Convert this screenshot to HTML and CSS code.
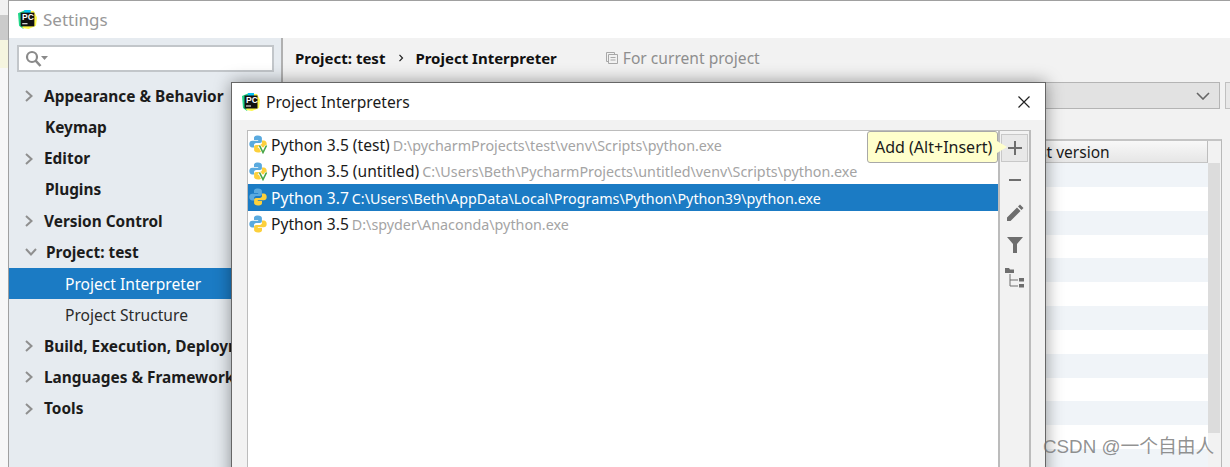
FILE: index.html
```html
<!DOCTYPE html>
<html lang="en">
<head>
  <meta charset="UTF-8">
  <title>Settings</title>
  <link rel="stylesheet" href="styles.css">
</head>
<body>

<svg class="defs" width="0" height="0">
  <symbol id="py" viewBox="0 0 18 18">
    <path class="py-blue" d="M9 .5C5.6 .5 5 1.8 5 3V5H9.2V5.8H3.2C1.6 5.8 .3 7 .3 9.1 .3 11.2 1.6 12.6 3.1 12.6H5V10.2C5 8.9 6 8 7.2 8H11C12 8 12.9 7.2 12.9 6.3V3C12.9 1.6 11.3 .5 9 .5Z"/>
    <path class="py-yellow" d="M9 17.5C12.4 17.5 13 16.2 13 15V13H8.8V12.2H14.8C16.4 12.2 17.7 11 17.7 8.9 17.7 6.8 16.4 5.4 14.9 5.4H13V7.8C13 9.1 12 10 10.8 10H7C6 10 5.1 10.8 5.1 11.7V15C5.1 16.4 6.7 17.5 9 17.5Z"/>
  </symbol>
  <symbol id="pc" viewBox="0 0 18 18">
    <path fill="#21d789" d="M0 3 7 0 9 4 5 18 1 15Z"/>
    <path fill="#fcf84a" d="M9 1 15 1 18 7 17 15 10 18 4 17Z"/>
    <path fill="#07c3f2" d="M6 0 12 0 12 4 6 4Z"/>
    <rect x="2.5" y="2.5" width="13" height="13" fill="#111"/>
    <rect x="4" y="12.5" width="5" height="1" fill="#fff"/>
  </symbol>
  <symbol id="venv" viewBox="0 0 10 10">
    <path class="venv-halo" d="M1.5 1.5 5 8.5 8.5 1.5"/>
    <path class="venv-mark" d="M1.5 1.5 5 8.5 8.5 1.5"/>
  </symbol>
</svg>

<div class="screen">
  <div class="desktop">
    <div class="strip-a"></div>
    <div class="strip-b"></div>
    <div class="strip-c"></div>
    <div class="strip-d"></div>
  </div>

  <div class="window">
    <div class="titlebar">
      <span class="logo">
        <svg width="19" height="19"><use href="#pc"/></svg>
        <b>PC</b>
      </span>
      <span class="window-title">Settings</span>
    </div>

    <div class="window-body">
      <div class="sidebar">
        <div class="search">
          <svg width="24" height="18" viewBox="0 0 24 18">
            <circle cx="7" cy="7" r="5" fill="none" stroke="#8a8a8a" stroke-width="2.2"/>
            <path d="M10.5 10.5 15.5 16" stroke="#8a8a8a" stroke-width="2.6"/>
            <path d="M16 6H23L19.5 10Z" fill="#8a8a8a"/>
          </svg>
        </div>
        <ul class="tree">
          <li class="node"><svg class="arrow" width="10" height="12" viewBox="0 0 10 12"><path d="M2 1 7.5 6 2 11"/></svg>Appearance &amp; Behavior</li>
          <li class="node no-arrow">Keymap</li>
          <li class="node"><svg class="arrow" width="10" height="12" viewBox="0 0 10 12"><path d="M2 1 7.5 6 2 11"/></svg>Editor</li>
          <li class="node no-arrow">Plugins</li>
          <li class="node"><svg class="arrow" width="10" height="12" viewBox="0 0 10 12"><path d="M2 1 7.5 6 2 11"/></svg>Version Control</li>
          <li class="node no-arrow open"><svg class="arrow" width="12" height="10" viewBox="0 0 12 10"><path d="M1 2 6 7.5 11 2"/></svg>Project: test</li>
          <li class="leaf selected">Project Interpreter</li>
          <li class="leaf">Project Structure</li>
          <li class="node"><svg class="arrow" width="10" height="12" viewBox="0 0 10 12"><path d="M2 1 7.5 6 2 11"/></svg>Build, Execution, Deployment</li>
          <li class="node"><svg class="arrow" width="10" height="12" viewBox="0 0 10 12"><path d="M2 1 7.5 6 2 11"/></svg>Languages &amp; Frameworks</li>
          <li class="node"><svg class="arrow" width="10" height="12" viewBox="0 0 10 12"><path d="M2 1 7.5 6 2 11"/></svg>Tools</li>
        </ul>
      </div>

      <div class="main">
        <div class="crumbs">
          <b>Project: test</b>
          <svg class="crumb-sep" width="6" height="8" viewBox="0 0 6 8"><path d="M1.5 .8 4.5 4 1.5 7.2"/></svg>
          <b>Project Interpreter</b>
          <span class="scope">
            <svg width="12" height="12" viewBox="0 0 12 12">
              <path d="M.5 .5H8.5V2.5M2.5 2.5H11.5V11.5H2.5ZM.5 .5V9.5H2.5M4.5 5.5H9.5M4.5 8H9.5" fill="none" stroke="#a8a8a8"/>
            </svg>
            For current project
          </span>
        </div>

        <div class="combo-row">
          <div class="combo">
            <svg width="14" height="8" viewBox="0 0 14 8"><path d="M1 1 7 7 13 1"/></svg>
          </div>
          <div class="combo-btn"></div>
        </div>

        <div class="table-wrap">
          <div class="table">
            <div class="thead">
              <span class="th th-name"></span>
              <span class="th th-ver"></span>
              <span class="th th-latest">Latest version</span>
            </div>
            <div class="rows">
              <div class="row"></div><div class="row"></div><div class="row"></div>
              <div class="row"></div><div class="row"></div><div class="row"></div>
              <div class="row"></div><div class="row"></div><div class="row"></div>
              <div class="row"></div><div class="row"></div><div class="row"></div>
              <div class="row"></div>
            </div>
          </div>
          <div class="scrollbar"><div class="thumb"></div></div>
        </div>
      </div>
    </div>
  </div>

  <div class="dialog">
    <div class="dialog-head">
      <span class="logo">
        <svg width="18" height="18"><use href="#pc"/></svg>
        <b>PC</b>
      </span>
      <span class="dialog-title">Project Interpreters</span>
      <svg class="close" width="14" height="14" viewBox="0 0 14 14"><path d="M1.5 1.5 12.5 12.5M12.5 1.5 1.5 12.5"/></svg>
    </div>
    <div class="dialog-body">
      <div class="panel">
        <div class="interp-list">
          <div class="interp">
            <span class="py-icon">
              <svg width="18" height="18"><use href="#py"/></svg>
              <svg class="venv" width="10" height="10"><use href="#venv"/></svg>
            </span>
            <span class="interp-name">Python 3.5 (test)</span>
            <span class="interp-path">D:\pycharmProjects\test\venv\Scripts\python.exe</span>
          </div>
          <div class="interp">
            <span class="py-icon">
              <svg width="18" height="18"><use href="#py"/></svg>
              <svg class="venv" width="10" height="10"><use href="#venv"/></svg>
            </span>
            <span class="interp-name">Python 3.5 (untitled)</span>
            <span class="interp-path">C:\Users\Beth\PycharmProjects\untitled\venv\Scripts\python.exe</span>
          </div>
          <div class="interp active">
            <span class="py-icon">
              <svg width="18" height="18"><use href="#py"/></svg>
            </span>
            <span class="interp-name">Python 3.7</span>
            <span class="interp-path">C:\Users\Beth\AppData\Local\Programs\Python\Python39\python.exe</span>
          </div>
          <div class="interp">
            <span class="py-icon">
              <svg width="18" height="18"><use href="#py"/></svg>
            </span>
            <span class="interp-name">Python 3.5</span>
            <span class="interp-path">D:\spyder\Anaconda\python.exe</span>
          </div>
        </div>

        <div class="toolbar">
          <div class="tool hover">
            <svg width="14" height="14" viewBox="0 0 14 14"><path d="M6 0H8V6H14V8H8V14H6V8H0V6H6Z"/></svg>
          </div>
          <div class="tool">
            <svg width="14" height="14" viewBox="0 0 14 14"><path d="M1 6H13V8H1Z"/></svg>
          </div>
          <div class="tool">
            <svg width="18" height="18" viewBox="0 0 18 18"><path d="M1 13.5 11 3.5 14.5 7 4.5 17H1ZM12 2.5 14 .5 17.5 4 15.5 6Z"/></svg>
          </div>
          <div class="tool">
            <svg width="16" height="16" viewBox="0 0 16 16"><path d="M0 0H16L10 7V16H6V7Z"/></svg>
          </div>
          <div class="tool">
            <svg width="20" height="20" viewBox="0 0 20 20">
              <path d="M0 0H4L5 1.5H9V5H0ZM14 10H19V13.5H14ZM14 16H19V19.5H14Z"/>
              <path d="M5 6V18H13M5 12H13" fill="none" stroke="#6e6e6e"/>
            </svg>
          </div>
        </div>

        <div class="tooltip">Add (Alt+Insert)</div>
      </div>
    </div>
  </div>

  <div class="watermark">CSDN @一个自由人</div>
</div>

</body>
</html>
```

FILE: styles.css
```css
* { box-sizing: border-box; }
html, body { margin: 0; height: 100%; overflow: hidden; }
body { font-family: "Noto Sans", "Open Sans", sans-serif; font-size: 15.6px; color: #1a1a1a; }
.defs { position: absolute; }

.screen {
  position: relative;
  display: flex;
  width: 1230px;
  height: 467px;
  overflow: hidden;
}

.py-blue { fill: #5aaadf; }
.py-yellow { fill: #fcd03c; }
.active .py-blue { fill: #3a80b4; }
.active .py-yellow { fill: #c9ad2e; }
.venv-halo { fill: none; stroke: #fff; stroke-width: 3; }
.venv-mark { fill: none; stroke: #46a546; stroke-width: 1.6; }

/* what shows behind the settings window */
.desktop { width: 8px; flex-shrink: 0; display: flex; flex-direction: column; }
.strip-a { height: 15px; background-color: #f1f1f1; }
.strip-b { height: 25px; background-color: #cbcbcb; }
.strip-c { height: 28px; background-color: #f5f5df; }
.strip-d { flex: 1; background-color: #f7f7f7; }

.window {
  flex: 1;
  display: flex;
  flex-direction: column;
  border-top: 1px solid #a0a0a0;
  border-left: 1px solid #a0a0a0;
  min-width: 0;
}

.titlebar {
  height: 37px;
  display: flex;
  align-items: center;
  padding-left: 9px;
  background-color: #fff;
}
.logo {
  position: relative;
  display: flex;
  align-items: center;
  justify-content: center;
}
.logo b {
  position: absolute;
  left: 4px;
  top: 3px;
  font-family: "Liberation Sans", sans-serif;
  font-size: 8.5px;
  line-height: 9px;
  color: #fff;
}
.window-title { margin-left: 6px; font-size: 17px; color: #989898; }

.window-body { flex: 1; display: flex; min-height: 0; }

.sidebar {
  flex-shrink: 0;
  background-color: #e6ebf0;
  border-right: 2px solid #b0b0b0;
  width: 274px;
}
.search {
  display: flex;
  align-items: center;
  height: 27px;
  margin: 7px 7px 0 8px;
  padding-left: 6px;
  background-color: #fff;
  border: 2px solid #c2c6ca;
}
.tree { list-style: none; margin: 8.4px 0 0 0; padding: 0; }
.node, .leaf {
  display: flex;
  align-items: center;
  height: 31.25px;
  white-space: nowrap;
  overflow: hidden;
}
.node { padding-left: 15px; font-size: 15.4px; font-weight: 700; color: #1c1c1c; }
.no-arrow { padding-left: 36px; }
.open { padding-left: 16px; }
.leaf { padding-left: 56px; font-size: 15.6px; color: #2a2a2a; }
.selected { background-color: #1b7bc4; color: #fff; }
.arrow { margin-right: 10px; fill: none; stroke: #8f8f8f; stroke-width: 2; flex-shrink: 0; }
.open .arrow { margin-right: 9px; }

.main { flex: 1; min-width: 0; background-color: #f2f2f2; display: flex; flex-direction: column; }
.crumbs {
  height: 44px;
  flex-shrink: 0;
  display: flex;
  align-items: center;
  padding: 0 0 5px 12px;
  font-size: 15px;
  color: #111;
}
.crumb-sep { margin: 0 11px 0 13px; fill: none; stroke: #222; stroke-width: 1.2; }
.scope {
  display: flex;
  align-items: center;
  gap: 5px;
  margin-left: 49px;
  font-size: 15.6px;
  color: #8e8e8e;
}

.combo-row { height: 27px; flex-shrink: 0; display: flex; gap: 5px; padding-left: 180px; }
.combo {
  width: 757px;
  display: flex;
  align-items: center;
  justify-content: flex-end;
  padding-right: 9px;
  background-color: #e2e2e2;
  border: 1px solid #b4b4b4;
}
.combo svg { fill: none; stroke: #666; stroke-width: 1.6; }
.combo-btn { flex: 1; background-color: #e8e8e8; border: 1px solid #c0c0c0; border-right: none; }

.table-wrap {
  flex: 1;
  display: flex;
  margin: 30px 8px 0 12px;
  border-top: 2px solid #c4c4c4;
  border-right: 1px solid #b8b8b8;
  min-height: 0;
}
.table { flex: 1; min-width: 0; background-color: #fff; }
.thead {
  display: flex;
  height: 22px;
  background-image: linear-gradient(#f8f8f8, #e6e6e6);
  border-right: 1px solid #bdbdbd;
  border-bottom: 1px solid #c4c4c4;
  font-size: 15.5px;
  line-height: 22px;
}
.th { padding-left: 4px; white-space: nowrap; }
.th-name { width: 400px; }
.th-ver { width: 310px; }
.th-latest { flex: 1; padding-left: 3px; }
.row { height: 23.85px; }
.row:nth-child(odd) { background-color: #f0f4f8; }
.scrollbar { width: 13px; background-color: #f2f2f2; }
.thumb { height: 270px; margin-top: 22px; width: 12px; background-color: #dcdcdc; }

/* modal, sits over the settings window */
.dialog {
  position: absolute;
  left: 231px;
  top: 82px;
  width: 815px;
  height: 420px;
  display: flex;
  flex-direction: column;
  background-color: #f2f2f2;
  border: 1px solid #666;
  box-shadow: 0 0 16px rgba(0, 0, 0, 0.4);
}
.dialog-head {
  height: 37px;
  flex-shrink: 0;
  display: flex;
  align-items: center;
  padding: 0 14px 0 10px;
  background-color: #fff;
}
.dialog-title { flex: 1; margin-left: 6px; font-size: 15.6px; color: #1a1a1a; }
.close { fill: none; stroke: #222; stroke-width: 1.2; }

.dialog-body { flex: 1; padding: 10px 14px 0 15px; min-height: 0; }
.panel {
  position: relative;
  display: flex;
  height: 100%;
  border: 1px solid #bcbcbc;
  border-right: 2px solid #bcbcbc;
}
.interp-list { flex: 1; min-width: 0; background-color: #fff; }
.interp {
  display: flex;
  align-items: center;
  height: 26.5px;
  padding-left: 1px;
  white-space: nowrap;
}
.py-icon { position: relative; display: flex; width: 18px; height: 18px; margin-right: 4px; }
.venv { position: absolute; right: -1px; bottom: -1px; }
.interp-name { padding-top: 1px; font-size: 15.6px; color: #1a1a1a; margin-right: 3px; }
.interp-path { padding-top: 2px; font-size: 14.3px; color: #a4a4a4; }
.active { background-color: #1b7bc4; }
.active .interp-name { color: #fff; }
.active .interp-path { color: #fff; }

.toolbar {
  width: 31px;
  flex-shrink: 0;
  display: flex;
  flex-direction: column;
  align-items: center;
  padding-top: 3px;
  gap: 5px;
  border-left: 2px solid #bcbcbc;
}
.tool {
  width: 27px;
  height: 27.5px;
  display: flex;
  align-items: center;
  justify-content: center;
  fill: #6e6e6e;
}
.hover { background-color: #e8e8e8; border: 1px solid #c8c8c8; }

.tooltip {
  position: absolute;
  top: 0;
  right: 31px;
  height: 32px;
  width: 131px;
  padding-left: 7px;
  line-height: 31px;
  font-size: 16px;
  white-space: nowrap;
  background-color: #ffffcc;
  border: 1px solid #a8a8a8;
  border-radius: 3px;
}
.tooltip::after {
  content: "";
  position: absolute;
  left: 129px;
  top: 9px;
  border-left: 10px solid #ffffcc;
  border-top: 6px solid transparent;
  border-bottom: 6px solid transparent;
}

.watermark {
  position: absolute;
  left: 1043px;
  top: 435px;
  font-family: "Liberation Sans", "Noto Sans CJK SC", sans-serif;
  font-size: 18.8px;
  line-height: 24px;
  white-space: nowrap;
  color: rgba(110, 110, 110, 0.75);
}
```
